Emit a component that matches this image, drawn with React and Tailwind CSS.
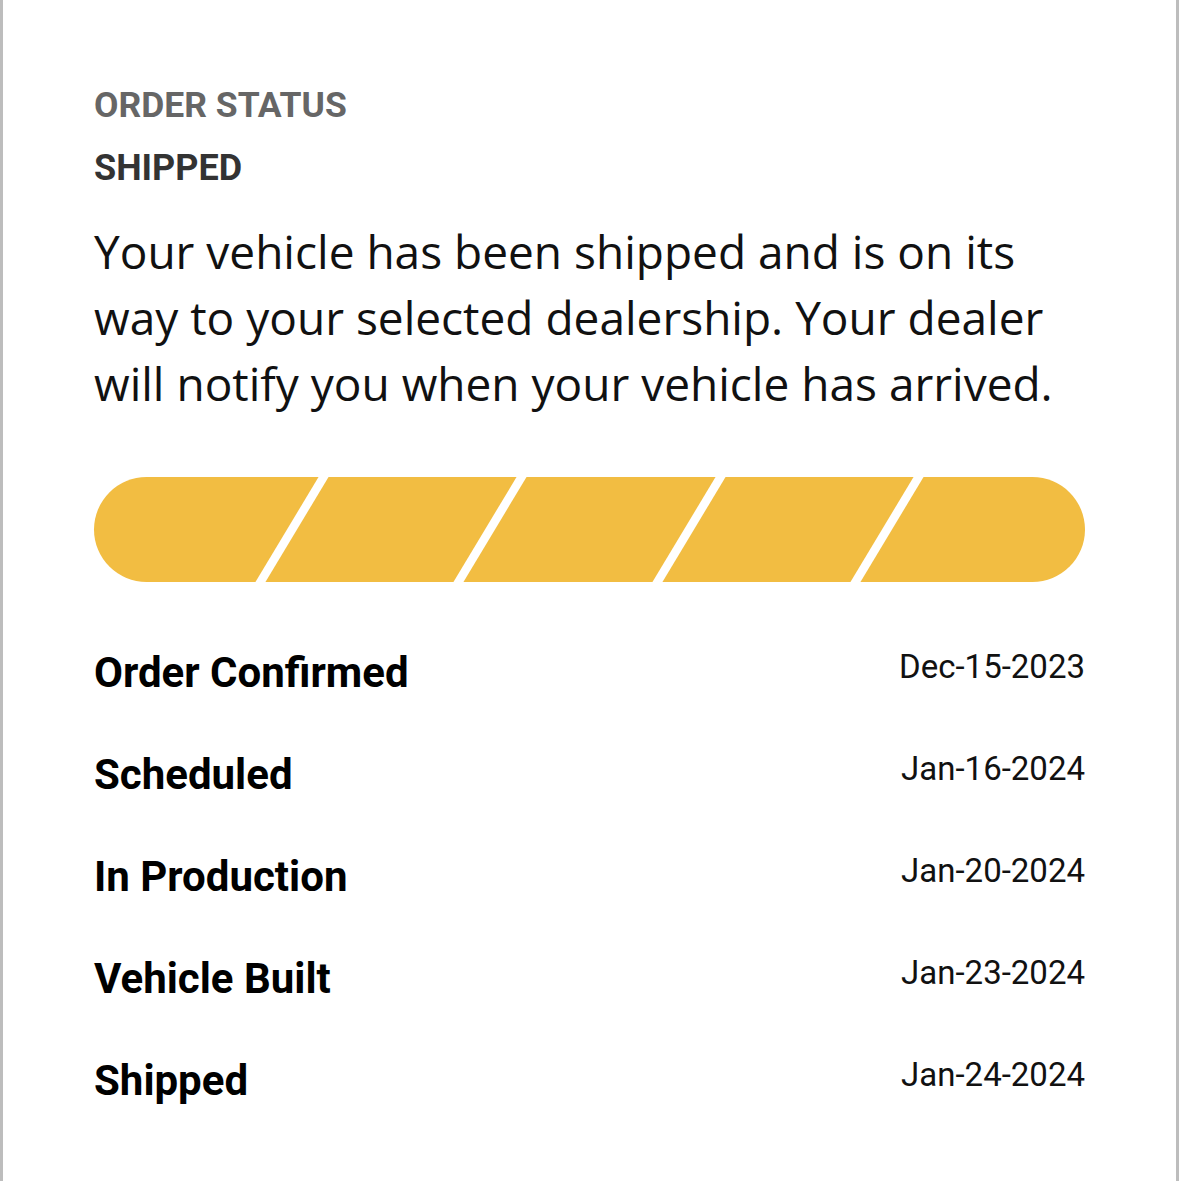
const milestones = [
  { label: "Order Confirmed", date: "Dec-15-2023" },
  { label: "Scheduled", date: "Jan-16-2024" },
  { label: "In Production", date: "Jan-20-2024" },
  { label: "Vehicle Built", date: "Jan-23-2024" },
  { label: "Shipped", date: "Jan-24-2024" },
];

function ProgressBar({ steps, done }) {
  return (
    <div className="grid grid-cols-5 h-[105px] rounded-full overflow-hidden bg-[#f2bd42]">
      {Array.from({ length: steps }).map((_, i) => (
        <div key={i} className={"relative " + (i < done ? "" : "bg-[#e5e5e5]")}>
          {i < steps - 1 && (
            <div className="absolute top-0 bottom-0 -right-[5px] w-[10px] bg-white -skew-x-[31deg]"></div>
          )}
        </div>
      ))}
    </div>
  );
}

export default function App() {
  return (
    <div className="min-h-screen w-full bg-white border-x-[3px] border-[#bdbdbd] px-[91px] pt-[85px] pb-[60px] font-['Roboto',sans-serif]">
      {/* Header */}
      <h3 className="text-[35.5px] leading-[40px] font-bold text-[#666666]">
        ORDER STATUS
      </h3>
      <h2 className="mt-[23px] text-[36px] leading-[40px] font-bold text-[#333333]">
        SHIPPED
      </h2>

      <p className="mt-[30px] text-[46px] leading-[66px] text-[#111111] font-['Open_Sans',sans-serif]">
        Your vehicle has been shipped and is on its way to your selected
        dealership. Your dealer will notify you when your vehicle has arrived.
      </p>

      {/* Progress */}
      <div className="mt-[61px]">
        <ProgressBar steps={5} done={5} />
      </div>

      {/* Milestones */}
      <div className="mt-[67px] flex flex-col gap-[54px]">
        {milestones.map((m) => (
          <div key={m.label} className="flex items-start justify-between">
            <span className="text-[42px] leading-[48px] font-bold text-black">
              {m.label}
            </span>
            <span className="text-[33px] leading-[36px] text-[#111111]">
              {m.date}
            </span>
          </div>
        ))}
      </div>
    </div>
  );
}
